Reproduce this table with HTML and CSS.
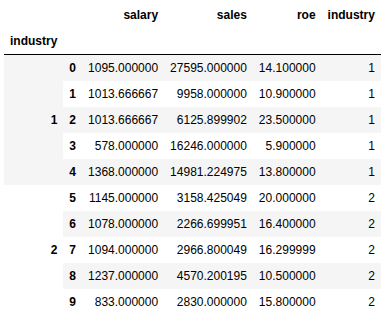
FILE: index.html
```html
<!DOCTYPE html>
<html lang="en">
<head>
    <meta charset="UTF-8">
    <title>DataFrame</title>
    <link rel="stylesheet" href="styles.css">
</head>
<body>
    <div class="output">
        <table class="dataframe">
            <thead>
                <tr>
                    <th></th>
                    <th></th>
                    <th>salary</th>
                    <th>sales</th>
                    <th>roe</th>
                    <th>industry</th>
                </tr>
                <tr>
                    <th>industry</th>
                    <th></th>
                    <th></th>
                    <th></th>
                    <th></th>
                    <th></th>
                </tr>
            </thead>
            <tbody>
                <tr>
                    <th rowspan="5">1</th>
                    <th>0</th>
                    <td>1095.000000</td>
                    <td>27595.000000</td>
                    <td>14.100000</td>
                    <td>1</td>
                </tr>
                <tr>
                    <th>1</th>
                    <td>1013.666667</td>
                    <td>9958.000000</td>
                    <td>10.900000</td>
                    <td>1</td>
                </tr>
                <tr>
                    <th>2</th>
                    <td>1013.666667</td>
                    <td>6125.899902</td>
                    <td>23.500000</td>
                    <td>1</td>
                </tr>
                <tr>
                    <th>3</th>
                    <td>578.000000</td>
                    <td>16246.000000</td>
                    <td>5.900000</td>
                    <td>1</td>
                </tr>
                <tr>
                    <th>4</th>
                    <td>1368.000000</td>
                    <td>14981.224975</td>
                    <td>13.800000</td>
                    <td>1</td>
                </tr>
                <tr>
                    <th rowspan="5">2</th>
                    <th>5</th>
                    <td>1145.000000</td>
                    <td>3158.425049</td>
                    <td>20.000000</td>
                    <td>2</td>
                </tr>
                <tr>
                    <th>6</th>
                    <td>1078.000000</td>
                    <td>2266.699951</td>
                    <td>16.400000</td>
                    <td>2</td>
                </tr>
                <tr>
                    <th>7</th>
                    <td>1094.000000</td>
                    <td>2966.800049</td>
                    <td>16.299999</td>
                    <td>2</td>
                </tr>
                <tr>
                    <th>8</th>
                    <td>1237.000000</td>
                    <td>4570.200195</td>
                    <td>10.500000</td>
                    <td>2</td>
                </tr>
                <tr>
                    <th>9</th>
                    <td>833.000000</td>
                    <td>2830.000000</td>
                    <td>15.800000</td>
                    <td>2</td>
                </tr>
            </tbody>
        </table>
    </div>
</body>
</html>
```

FILE: styles.css
```css
body {
    margin: 0;
    padding: 0;
    background-color: #fff;
    font-family: "Liberation Sans", Arial, sans-serif;
}

.output {
    padding: 2px 4px;
}

.dataframe {
    border: none;
    border-collapse: collapse;
    border-spacing: 0;
    color: black;
    font-size: 12px;
}

.dataframe thead {
    border-bottom: 1px solid black;
    vertical-align: bottom;
}

.dataframe tr,
.dataframe th,
.dataframe td {
    text-align: right;
    vertical-align: middle;
    padding: 0.5em 0.5em;
    line-height: normal;
    white-space: nowrap;
    border: none;
}

.dataframe th {
    font-weight: bold;
}

.dataframe tbody tr:nth-child(odd) {
    background: #f5f5f5;
}
```
